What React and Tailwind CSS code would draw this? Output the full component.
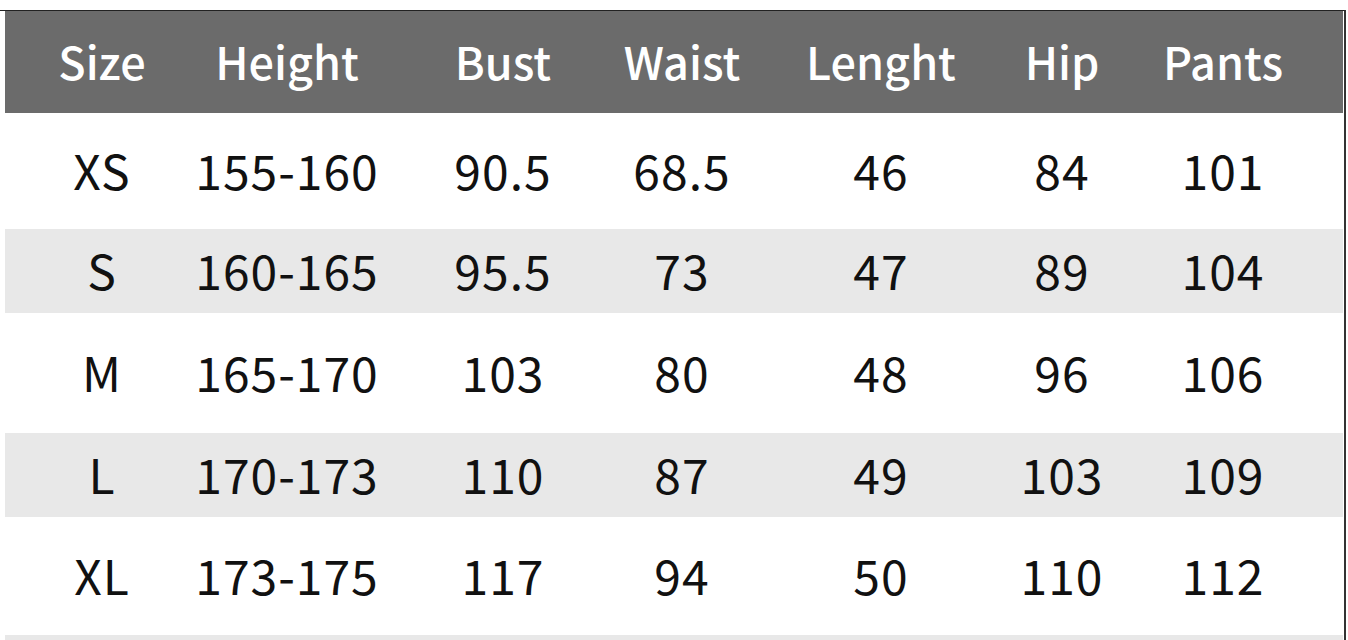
import React from 'react';

const cols = [
  'w-[190px] pl-[4px]',
  'w-[200px] pr-[16px]',
  'w-[198px] pl-[18px]',
  'w-[189px] pr-[11px]',
  'w-[190px] pl-[8px]',
  'w-[171px] pl-[9px]',
  'w-[200px] pr-[40px]',
];

const headers = ['Size', 'Height', 'Bust', 'Waist', 'Lenght', 'Hip', 'Pants'];

const rows = [
  { cells: ['XS', '155-160', '90.5', '68.5', '46', '84', '101'], cls: 'h-[116px] bg-white' },
  { cells: ['S', '160-165', '95.5', '73', '47', '89', '104'], cls: 'h-[84px] bg-[#e8e8e8]' },
  { cells: ['M', '165-170', '103', '80', '48', '96', '106'], cls: 'h-[120px] bg-white' },
  { cells: ['L', '170-173', '110', '87', '49', '103', '109'], cls: 'h-[84px] bg-[#e8e8e8]' },
  { cells: ['XL', '173-175', '117', '94', '50', '110', '112'], cls: 'h-[118px] bg-white' },
];

function Row({ cells, className, textClass }) {
  return (
    <div className={`flex items-center ${className}`}>
      {cells.map((c, i) => (
        <div key={i} className={`shrink-0 text-center ${cols[i]} ${textClass}`}>
          {c}
        </div>
      ))}
    </div>
  );
}

export default function App() {
  return (
    <div
      className="w-[1348px] h-[640px] overflow-hidden bg-white pt-[10px]"
      style={{ fontFamily: '"Noto Sans CJK SC", "Noto Sans", sans-serif' }}
    >
      <div className="w-[1346px] border-t border-r-2 border-t-[#222] border-r-[#333] pl-[5px] h-[640px]">
        {/* header */}
        <Row
          cells={headers}
          className="h-[102px] bg-[#6b6b6b] w-[1338px] pb-[4px]"
          textClass="text-white text-[45px] font-medium leading-none"
        />

        {/* body rows */}
        {rows.map((r, idx) => (
          <Row
            key={idx}
            cells={r.cells}
            className={`${r.cls} w-[1338px] pb-[4px]`}
            textClass="text-[#111] text-[48px] leading-none tracking-[1px]"
          />
        ))}
        <div className="h-[40px] bg-[#e8e8e8] w-[1338px]" />
      </div>
    </div>
  );
}
